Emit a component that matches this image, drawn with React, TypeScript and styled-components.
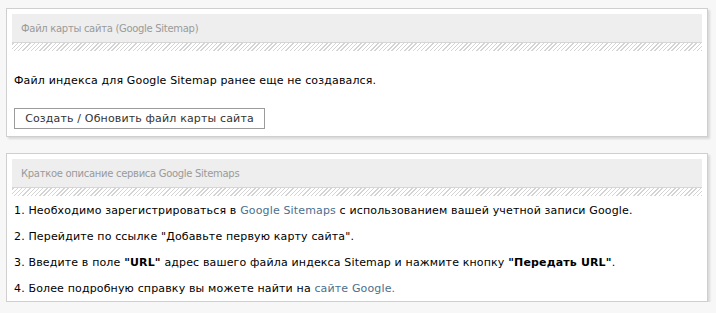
import styled, { createGlobalStyle } from 'styled-components';

const GlobalStyle = createGlobalStyle`
  body {
    margin: 0;
    background: #f7f7f7;
    font-family: Tahoma, "DejaVu Sans", Verdana, sans-serif;
  }
`;

const Page = styled.div`
  display: flex;
  flex-direction: column;
  gap: 16px;
  padding: 8px 0 0 6px;
`;

const Panel = styled.section`
  width: 690px;
  background: #fff;
  border: 1px solid #cfcfcf;
  box-shadow: 2px 2px 2px rgba(0, 0, 0, 0.12);
  padding: 5px;
`;

const Header = styled.div`
  height: 28px;
  display: flex;
  align-items: center;
  padding-left: 9px;
  background: #eeeeee;
  border-bottom: 1px solid #d6d6d6;
  color: #9a9a9a;
  font-size: 10px;
  letter-spacing: -0.3px;
`;

const Hatch = styled.div`
  height: 8px;
  background: repeating-linear-gradient(
    -45deg,
    #d4d4d4 0 1px,
    #ffffff 1px 3px
  );
`;

const Body = styled.div<{ $bottom?: number }>`
  padding: 0 0 ${(p) => p.$bottom ?? 0}px 2px;
  font-size: 11px;
  letter-spacing: 0.15px;
  color: #000;
`;

const Message = styled.p`
  margin: 22px 0 0;
  line-height: 15px;
`;

const Button = styled.button`
  margin-top: 20px;
  width: 251px;
  height: 21px;
  background: #fff;
  border: 1px solid #9b9b9b;
  color: #333;
  font-family: inherit;
  font-size: 11px;
  letter-spacing: 0.15px;
  padding: 0;
`;

const Steps = styled.ol`
  list-style: none;
  margin: 7px 0 0;
  padding: 0;
  display: flex;
  flex-direction: column;
  gap: 11px;
  line-height: 15px;
`;

const Link = styled.a`
  color: #4b6f8e;
  text-decoration: none;
`;

export default function App() {
  return (
    <>
      <GlobalStyle />
      <Page>
        <Panel>
          <Header>Файл карты сайта (Google Sitemap)</Header>
          <Hatch />
          <Body $bottom={2}>
            <Message>Файл индекса для Google Sitemap ранее еще не создавался.</Message>
            <Button>Создать / Обновить файл карты сайта</Button>
          </Body>
        </Panel>
        <Panel>
          <Header>Краткое описание сервиса Google Sitemaps</Header>
          <Hatch />
          <Body>
            <Steps>
              <li>
                1. Необходимо зарегистрироваться в <Link href="#">Google Sitemaps</Link> с
                использованием вашей учетной записи Google.
              </li>
              <li>2. Перейдите по ссылке "Добавьте первую карту сайта".</li>
              <li>
                3. Введите в поле <b>"URL"</b> адрес вашего файла индекса Sitemap и нажмите
                кнопку <b>"Передать URL"</b>.
              </li>
              <li>
                4. Более подробную справку вы можете найти на <Link href="#">сайте Google.</Link>
              </li>
            </Steps>
          </Body>
        </Panel>
      </Page>
    </>
  );
}
